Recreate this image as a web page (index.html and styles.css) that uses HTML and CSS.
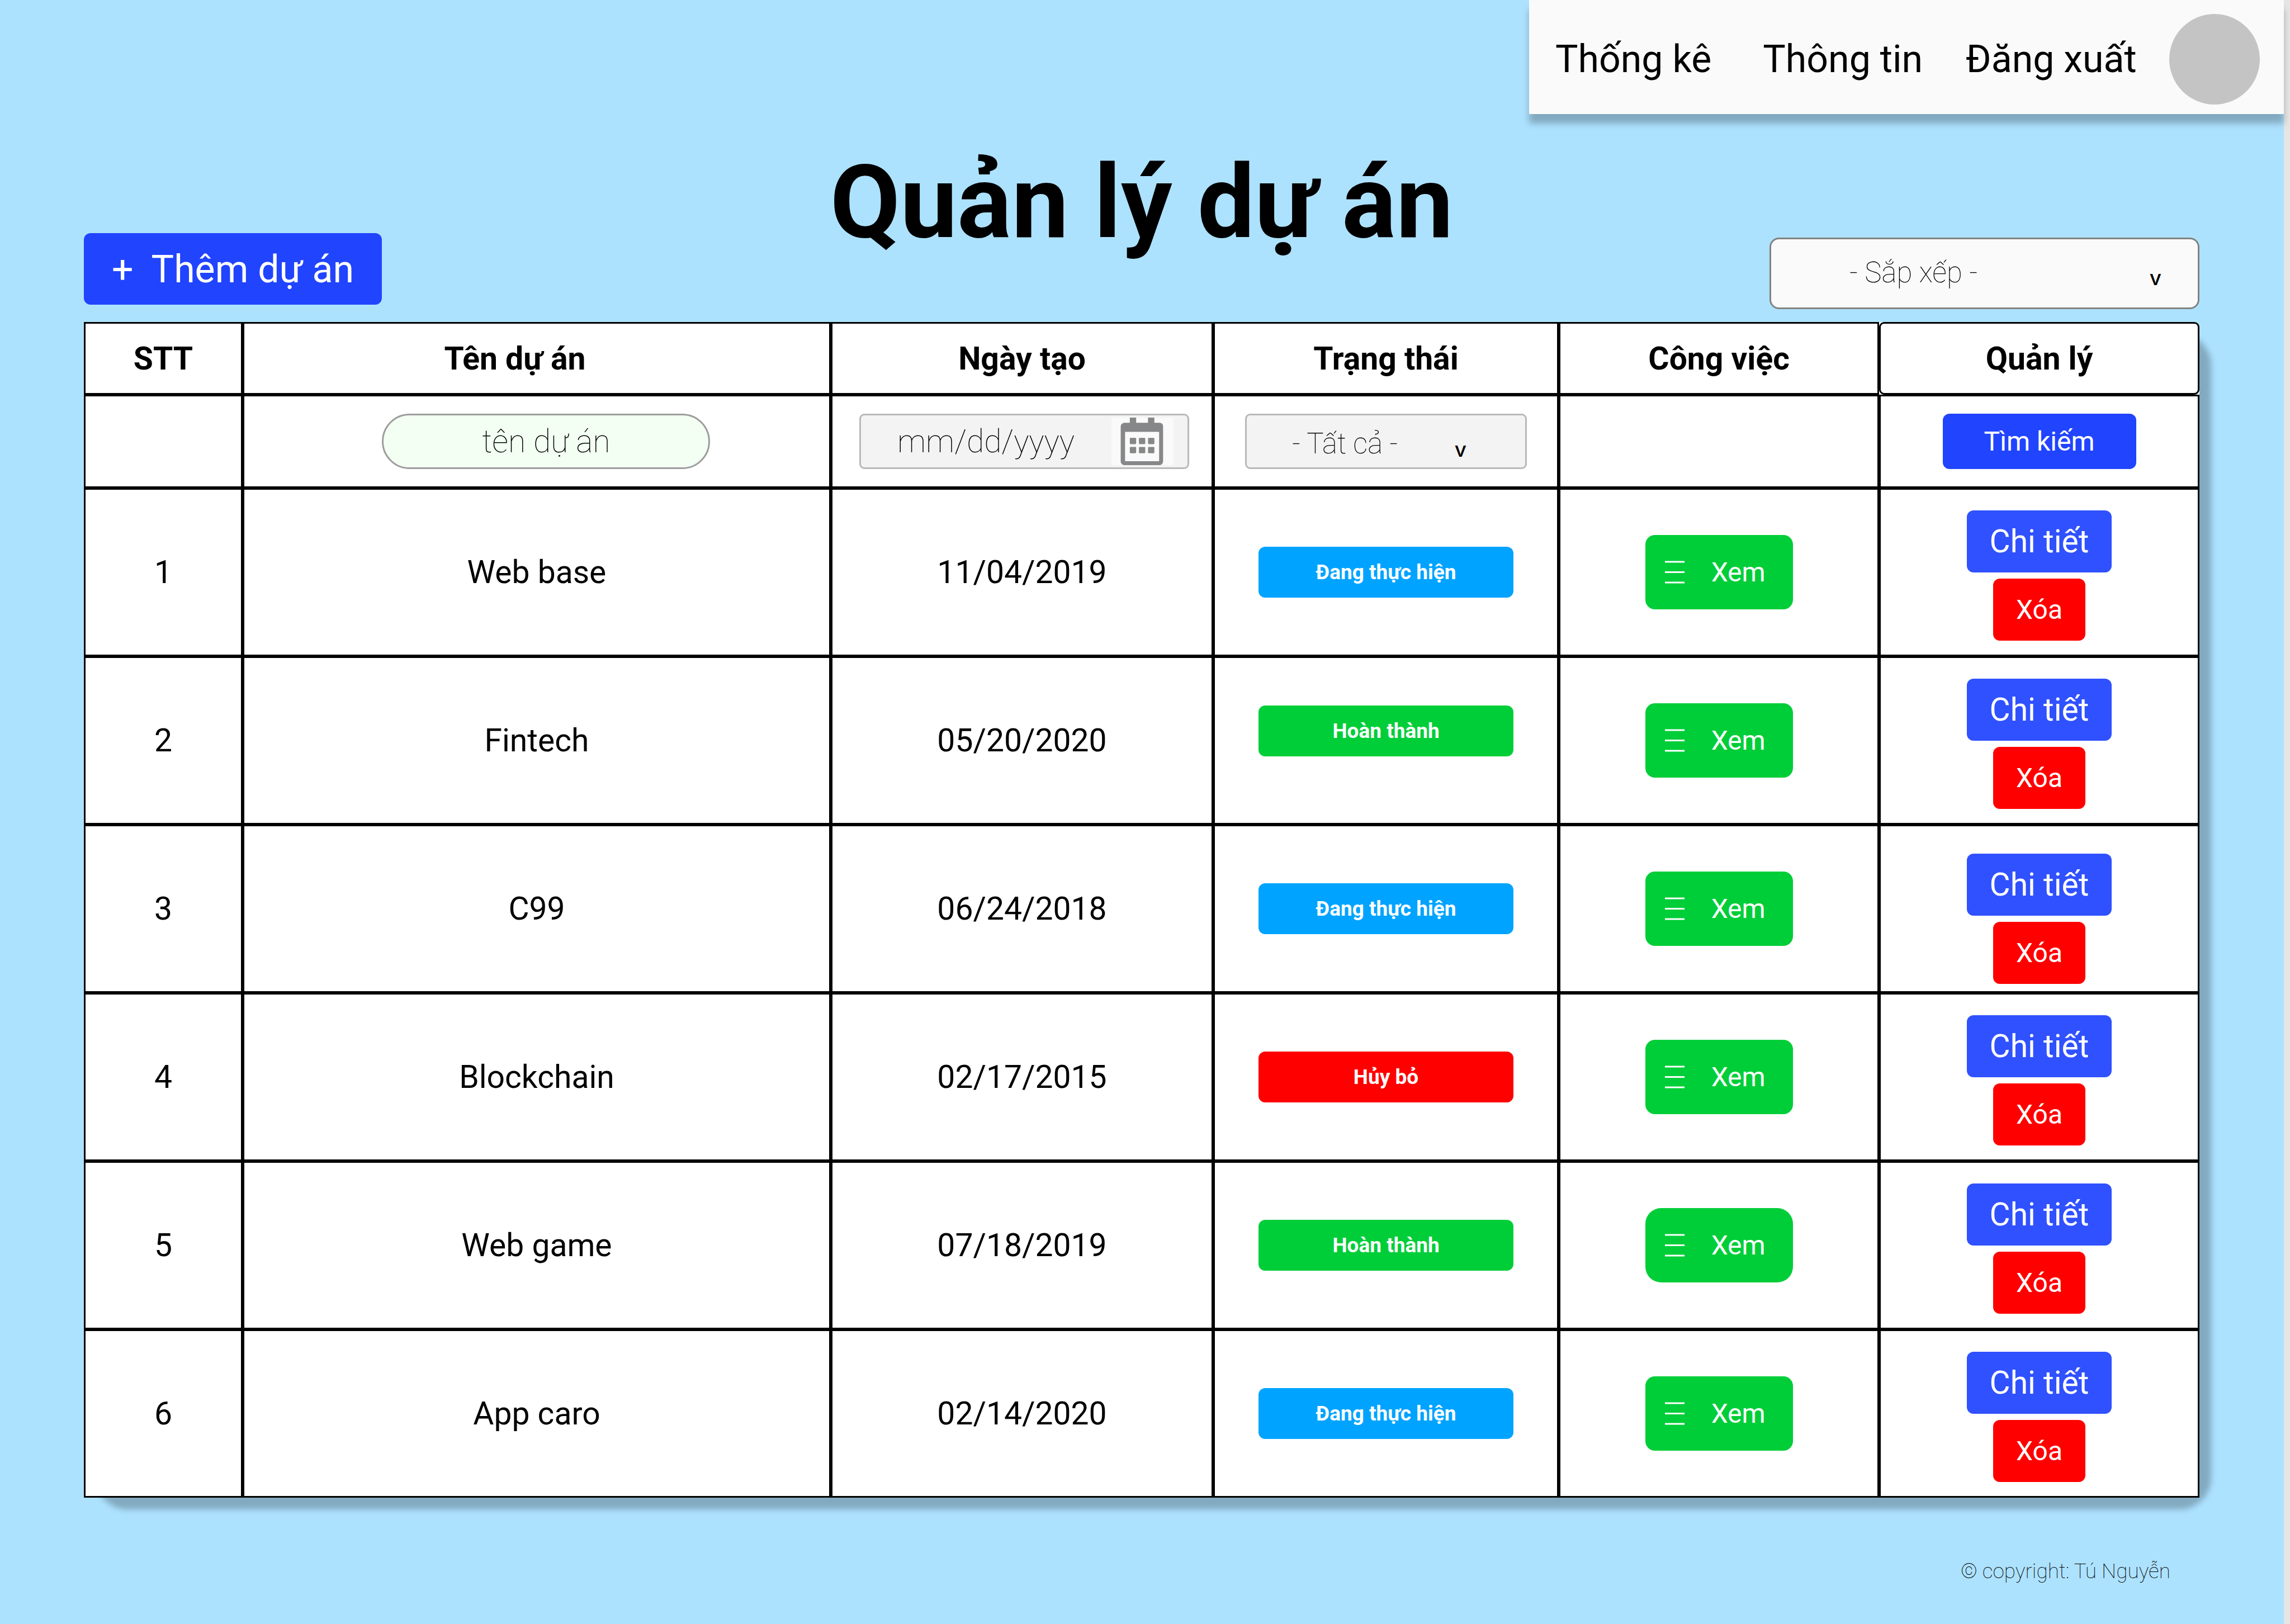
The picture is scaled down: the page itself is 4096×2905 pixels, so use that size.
FILE: index.html
```
<!DOCTYPE html>
<html lang="vi">
<head>
<meta charset="utf-8">
<title>Quản lý dự án</title>
<link rel="stylesheet" href="styles.css">
</head>
<body>
<div class="page">
  <nav class="menu">
    <a class="menu-link" href="#">Thống kê</a>
    <a class="menu-link" href="#">Thông tin</a>
    <a class="menu-link" href="#">Đăng xuất</a>
    <span class="avatar"></span>
  </nav>
  <main class="content">
    <header class="toolbar">
      <button class="btn btn-add" type="button"><span>+</span><span>Thêm dự án</span></button>
      <h1 class="title">Quản lý dự án</h1>
      <div class="dropdown dropdown-sort">
        <select class="field" aria-label="Sắp xếp"><option>- Sắp xếp -</option></select>
        <span class="caret">v</span>
      </div>
    </header>
    <div class="table-card">
    <table class="projects">
      <colgroup>
        <col class="col-index"><col class="col-name"><col class="col-date"><col class="col-status"><col class="col-tasks"><col class="col-manage">
      </colgroup>
      <thead>
        <tr class="head-row">
          <th>STT</th><th class="head-name">Tên dự án</th><th>Ngày tạo</th><th>Trạng thái</th><th>Công việc</th><th class="head-manage">Quản lý</th>
        </tr>
        <tr class="filter-row">
          <td></td>
          <td class="filter-name"><input class="field field-name" type="text" placeholder="tên dự án" aria-label="Tên dự án"></td>
          <td class="filter-date">
            <div class="date">
              <input class="field field-date" type="text" placeholder="mm/dd/yyyy" aria-label="Ngày tạo">
              <svg class="calendar" viewBox="0 0 156 120" aria-hidden="true">
                <rect width="156" height="120" fill="#fafafa"/>
                <g fill="#868788">
                  <path d="M46 0h16v13h30V0h16v13h14q8 1 8 9v89q-1 8-9 9H32q-8-1-9-9V22q1-8 9-9h14zM34 36v74h86V36z" fill-rule="evenodd"/>
                  <rect x="46" y="51" width="16" height="16" rx="2"/><rect x="69" y="51" width="16" height="16" rx="2"/><rect x="92" y="51" width="16" height="16" rx="2"/>
                  <rect x="46" y="74" width="16" height="16" rx="2"/><rect x="69" y="74" width="16" height="16" rx="2"/><rect x="92" y="74" width="16" height="16" rx="2"/>
                </g>
              </svg>
            </div>
          </td>
          <td>
            <div class="dropdown dropdown-status">
              <select class="field" aria-label="Trạng thái"><option>- Tất cả -</option></select>
              <span class="caret">v</span>
            </div>
          </td>
          <td></td>
          <td><button class="btn btn-search" type="button">Tìm kiếm</button></td>
        </tr>
      </thead>
      <tbody>
        <tr>
          <td>1</td><td>Web base</td><td>11/04/2019</td>
          <td><span class="status status-active">Đang thực hiện</span></td>
          <td><button class="btn btn-view" type="button"><svg class="lines" viewBox="0 0 35 41"><path d="M0 2h35M0 20.500h35M0 39h35"/></svg>Xem</button></td>
          <td class="manage"><div class="actions"><button class="btn btn-detail" type="button">Chi tiết</button><button class="btn btn-delete" type="button">Xóa</button></div></td>
        </tr>
        <tr>
          <td>2</td><td>Fintech</td><td>05/20/2020</td>
          <td class="status-raised"><span class="status status-done">Hoàn thành</span></td>
          <td><button class="btn btn-view" type="button"><svg class="lines" viewBox="0 0 35 41"><path d="M0 2h35M0 20.500h35M0 39h35"/></svg>Xem</button></td>
          <td class="manage"><div class="actions"><button class="btn btn-detail" type="button">Chi tiết</button><button class="btn btn-delete" type="button">Xóa</button></div></td>
        </tr>
        <tr>
          <td>3</td><td>C99</td><td>06/24/2018</td>
          <td><span class="status status-active">Đang thực hiện</span></td>
          <td><button class="btn btn-view" type="button"><svg class="lines" viewBox="0 0 35 41"><path d="M0 2h35M0 20.500h35M0 39h35"/></svg>Xem</button></td>
          <td class="manage manage-low"><div class="actions"><button class="btn btn-detail" type="button">Chi tiết</button><button class="btn btn-delete" type="button">Xóa</button></div></td>
        </tr>
        <tr>
          <td>4</td><td>Blockchain</td><td>02/17/2015</td>
          <td><span class="status status-cancelled">Hủy bỏ</span></td>
          <td><button class="btn btn-view" type="button"><svg class="lines" viewBox="0 0 35 41"><path d="M0 2h35M0 20.500h35M0 39h35"/></svg>Xem</button></td>
          <td class="manage"><div class="actions"><button class="btn btn-detail" type="button">Chi tiết</button><button class="btn btn-delete" type="button">Xóa</button></div></td>
        </tr>
        <tr>
          <td>5</td><td>Web game</td><td>07/18/2019</td>
          <td><span class="status status-done">Hoàn thành</span></td>
          <td><button class="btn btn-view btn-view-round" type="button"><svg class="lines" viewBox="0 0 35 41"><path d="M0 2h35M0 20.500h35M0 39h35"/></svg>Xem</button></td>
          <td class="manage"><div class="actions"><button class="btn btn-detail" type="button">Chi tiết</button><button class="btn btn-delete" type="button">Xóa</button></div></td>
        </tr>
        <tr>
          <td>6</td><td>App caro</td><td>02/14/2020</td>
          <td><span class="status status-active">Đang thực hiện</span></td>
          <td><button class="btn btn-view" type="button"><svg class="lines" viewBox="0 0 35 41"><path d="M0 2h35M0 20.500h35M0 39h35"/></svg>Xem</button></td>
          <td class="manage"><div class="actions"><button class="btn btn-detail" type="button">Chi tiết</button><button class="btn btn-delete" type="button">Xóa</button></div></td>
        </tr>
      </tbody>
    </table>
    </div>
  </main>
  <footer class="footer">© copyright: Tú Nguyễn</footer>
</div>
</body>
</html>
```
FILE: styles.css
```
* {
  box-sizing: border-box;
}

body {
  margin: 0;
  padding-right: 11px;
  background: #e5e5e5;
  color: #000;
  font-family: Roboto, "Liberation Sans", sans-serif;
  font-size: 57px;
  line-height: 67px;
}

.page {
  min-height: 100vh;
  background: #ade2ff;
}

/* Top menu */
.menu {
  display: flex;
  align-items: center;
  width: 1350px;
  height: 204px;
  margin-left: auto;
  padding: 7px 43px 0 47px;
  background: #fafafa;
  box-shadow: 0 17px 11px rgba(0, 0, 0, 0.25);
}

.menu-link {
  flex: none;
  margin-right: 92px;
  color: #000;
  font-size: 68px;
  line-height: 80px;
  text-decoration: none;
}

.menu-link + .menu-link {
  margin-right: 77px;
}

.menu .menu-link:nth-child(3) {
  margin-right: 0;
}

.avatar {
  flex: none;
  width: 162px;
  height: 162px;
  margin-left: auto;
  border-radius: 50%;
  background: #c4c4c4;
}

/* Heading row */
.content {
  padding: 51px 151px 0 150px;
}

.toolbar {
  display: grid;
  grid-template-columns: 1fr auto 1fr;
  align-items: end;
  height: 321px;
}

.title {
  align-self: start;
  margin: 0;
  font-size: 182px;
  font-weight: 700;
  line-height: 213px;
}

.btn {
  border: 0;
  padding: 0;
  border-radius: 12px;
  color: #fff;
  font-family: inherit;
  font-size: 48px;
  line-height: 56px;
}

.btn-add {
  display: flex;
  align-items: center;
  gap: 32px;
  width: 533px;
  height: 128px;
  margin-bottom: 31px;
  padding: 2px 0 0 50px;
  background: #2144ff;
  font-size: 68px;
}

.field {
  width: 100%;
  height: 99px;
  border: 3px solid #b9b9b9;
  border-radius: 9px;
  background: #f3f3f3;
  color: #000;
  font-family: inherit;
  font-size: 57px;
  font-weight: 100;
  appearance: none;
}

.field::placeholder {
  color: #000;
  opacity: 1;
}

.dropdown {
  display: grid;
  align-items: center;
}

.dropdown .field,
.caret {
  grid-area: 1 / 1;
}

.dropdown .field {
  font-size: 51px;
}

.caret {
  justify-self: end;
  font-family: Inter, sans-serif;
  font-size: 37px;
  font-weight: 500;
  line-height: 48px;
  pointer-events: none;
}

.dropdown-sort {
  justify-self: end;
  width: 769px;
  margin-bottom: 23px;
}

.dropdown-sort .field {
  height: 128px;
  padding: 0 0 4px 140px;
  border-color: #828282;
  border-radius: 17px;
  background: #fafafa;
}

.dropdown-sort .caret {
  margin: 15px 68px 0 0;
}

/* Project table */
.table-card {
  border-radius: 57px;
  box-shadow: 21px 21px 11px rgba(0, 0, 0, 0.25);
}

.projects {
  width: 100%;
  table-layout: fixed;
  border-spacing: 0;
  border-radius: 0 9px 0 0;
  background: #fff;
  text-align: center;
}

.col-index { width: 7.5%; }
.col-name { width: 27.81%; }
.col-date { width: 18.07%; }
.col-status { width: 16.34%; }
.col-tasks { width: 15.14%; }
.col-manage { width: 15.14%; }

.projects th,
.projects td {
  height: 301px;
  padding: 0;
  border: 3px solid #000;
  vertical-align: middle;
}

.projects .head-row th {
  height: 130px;
  font-weight: 700;
}

.projects .head-name {
  padding-right: 78px;
}

.projects .head-manage {
  border-radius: 9px;
}

.projects .filter-row td {
  height: 167px;
}

.projects .filter-name {
  padding-left: 34px;
}

.projects .filter-date {
  padding-left: 8px;
}

.field-name {
  display: block;
  width: 587px;
  margin: 0 auto;
  border-color: #9c9c9c;
  border-radius: 50px;
  background: #f3fff3;
  text-align: center;
}

.date {
  display: grid;
  align-items: center;
  width: 590px;
  margin: 0 auto;
}

.field-date,
.calendar {
  grid-area: 1 / 1;
}

.field-date {
  padding-left: 65px;
}

.calendar {
  justify-self: end;
  width: 111px;
  height: 85px;
  margin-right: 28px;
}

.dropdown-status {
  width: 504px;
  margin: 0 auto;
}

.dropdown-status .field {
  padding: 8px 0 0 81px;
}

.dropdown-status .caret {
  margin: 29px 108px 0 0;
}

.btn-search {
  width: 346px;
  height: 99px;
  background: #2144ff;
}

.status {
  display: block;
  width: 456px;
  margin: 0 auto;
  border-radius: 12px;
  color: #fff;
  font-size: 37px;
  font-weight: 700;
  line-height: 91px;
}

.status-active { background: #00a3ff; }
.status-done { background: #00ce38; }
.status-cancelled { background: #f00; }

.projects .status-raised {
  padding-bottom: 34px;
}

.btn-view {
  display: flex;
  align-items: center;
  gap: 48px;
  width: 264px;
  height: 133px;
  margin: 0 auto;
  padding-left: 35px;
  border-radius: 17px;
  background: #00ce38;
}

.btn-view-round {
  border-radius: 28px;
}

.lines {
  width: 35px;
  height: 41px;
  fill: none;
  stroke: #fff;
  stroke-width: 3;
}

.projects .manage {
  padding-top: 37px;
  vertical-align: top;
}

.projects .manage-low {
  padding-top: 49px;
}

.actions {
  display: flex;
  flex-direction: column;
  align-items: center;
  gap: 11px;
}

.btn-detail {
  width: 259px;
  height: 111px;
  background: #3051ff;
  font-size: 57px;
}

.btn-delete {
  width: 165px;
  height: 111px;
  background: #f00;
}

.footer {
  padding: 108px 203px 0 0;
  font-size: 37px;
  font-weight: 100;
  line-height: 48px;
  text-align: right;
}
```
